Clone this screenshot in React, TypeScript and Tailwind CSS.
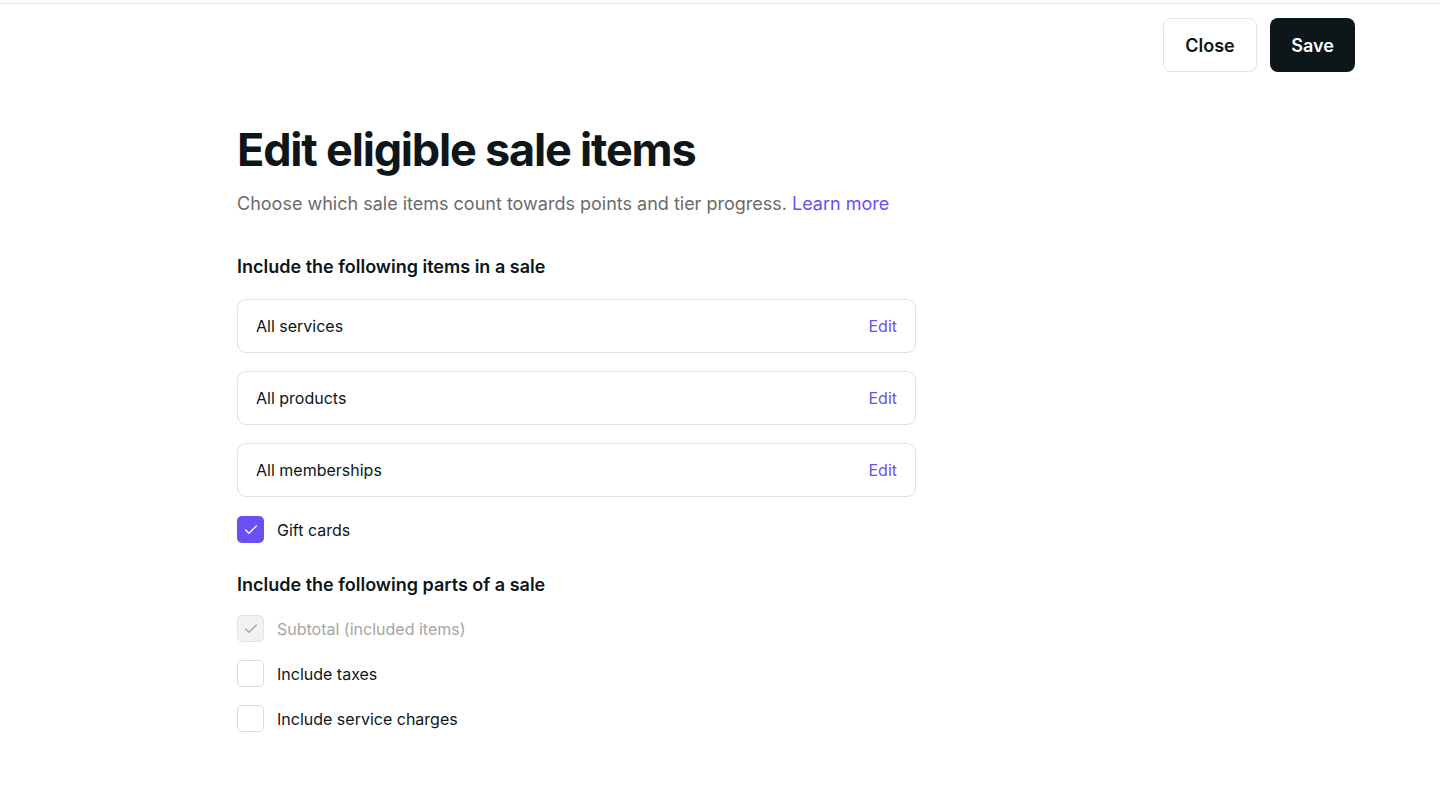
import { Check } from 'lucide-react';

const ITEMS = ['All services', 'All products', 'All memberships'];

const PARTS: { label: string; state: 'disabled' | 'off' }[] = [
  { label: 'Subtotal (included items)', state: 'disabled' },
  { label: 'Include taxes', state: 'off' },
  { label: 'Include service charges', state: 'off' },
];

function CheckBox({ state }: { state: 'on' | 'off' | 'disabled' }) {
  if (state === 'on') {
    return (
      <span className="flex h-[27px] w-[27px] items-center justify-center rounded-[5px] bg-[#6950f3]">
        <Check size={16} strokeWidth={2} className="text-white" />
      </span>
    );
  }
  if (state === 'disabled') {
    return (
      <span className="flex h-[27px] w-[27px] items-center justify-center rounded-[5px] border border-[#e2e2e2] bg-[#f2f2f2]">
        <Check size={16} strokeWidth={2} className="text-[#a5a5a5]" />
      </span>
    );
  }
  return <span className="block h-[27px] w-[27px] rounded-[5px] border border-[#dcdcdc] bg-white" />;
}

export default function App() {
  return (
    <div className="min-h-[800px] bg-white text-[#0d1619]" style={{ fontFamily: 'Inter, "Noto Sans", sans-serif' }}>
      <div className="pt-[3px]">
        <div className="border-t border-[#e0e0e0]" />
      </div>

      <div className="flex justify-end gap-[13px] pr-[85px] pt-[14px]">
        <button className="h-[54px] w-[94px] rounded-[8px] border border-[#e3e3e3] bg-white text-[18px] font-semibold">
          Close
        </button>
        <button className="h-[54px] w-[85px] rounded-[8px] bg-[#0d1619] text-[18px] font-semibold text-white">
          Save
        </button>
      </div>

      <div className="pl-[237px] pt-[50px]">
        <h1 className="text-[45px] font-bold leading-[56px] tracking-[-1.2px]">Edit eligible sale items</h1>
        <p className="mt-[13px] text-[18px] leading-[26px] text-[#6b6b6b]">
          Choose which sale items count towards points and tier progress.{' '}
          <span className="text-[#6950f3]">Learn more</span>
        </p>

        <div className="w-[679px]">
          <h2 className="mt-[37px] text-[18px] font-semibold leading-[26px]">Include the following items in a sale</h2>

          <div className="mt-[19px] flex flex-col gap-[18px]">
            {ITEMS.map((item) => (
              <div
                key={item}
                className="flex h-[54px] items-center justify-between rounded-[9px] border border-[#e0e0e0] px-[18px]"
              >
                <span className="text-[16px]">{item}</span>
                <span className="text-[16px] text-[#6950f3]">Edit</span>
              </div>
            ))}
          </div>

          <div className="mt-[19px] flex items-center gap-[13px]">
            <CheckBox state="on" />
            <span className="text-[16px]">Gift cards</span>
          </div>

          <h2 className="mt-[29px] text-[18px] font-semibold leading-[26px]">Include the following parts of a sale</h2>

          <div className="mt-[17px] flex flex-col gap-[18px]">
            {PARTS.map((p) => (
              <div key={p.label} className="flex items-center gap-[13px]">
                <CheckBox state={p.state} />
                <span className={p.state === 'disabled' ? 'text-[16px] text-[#a5a5a5]' : 'text-[16px]'}>{p.label}</span>
              </div>
            ))}
          </div>
        </div>
      </div>
    </div>
  );
}
